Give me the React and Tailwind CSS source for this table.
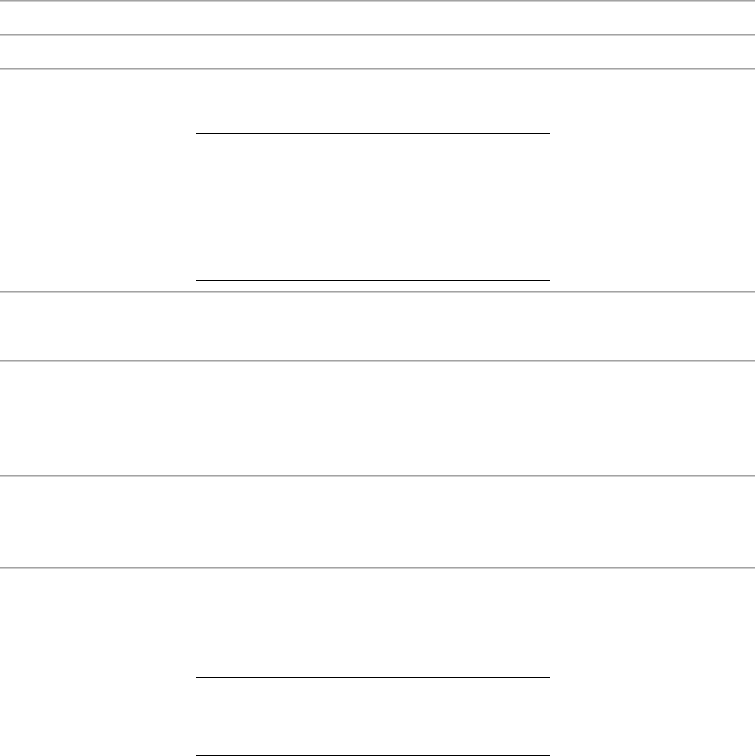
import React from "react";

function Rule() {
    // grey two-tone divider across the full width
    return <div className="w-full border-t border-b border-t-[#a3a3a3] border-b-[#cdcdcd]" />;
}

function ShortRule() {
    return (
        <div className="pl-[196px]">
            <div className="w-[354px] border-t border-black" />
        </div>
    );
}

export default function App() {
    return (
        <div className="w-full min-h-[756px] bg-white font-['Liberation_Sans',sans-serif]">
            <Rule />
            <div className="h-8" />
            <Rule />
            <div className="h-8" />
            <Rule />

            <div className="h-[63px]" />
            <ShortRule />
            <div className="h-[146px]" />
            <ShortRule />
            <div className="h-[10px]" />
            <Rule />

            <div className="h-[67px]" />
            <Rule />

            <div className="h-[113px]" />
            <Rule />

            <div className="h-[90px]" />
            <Rule />

            <div className="h-[108px]" />
            <ShortRule />
            <div className="h-[77px]" />
            <ShortRule />
        </div>
    );
}
